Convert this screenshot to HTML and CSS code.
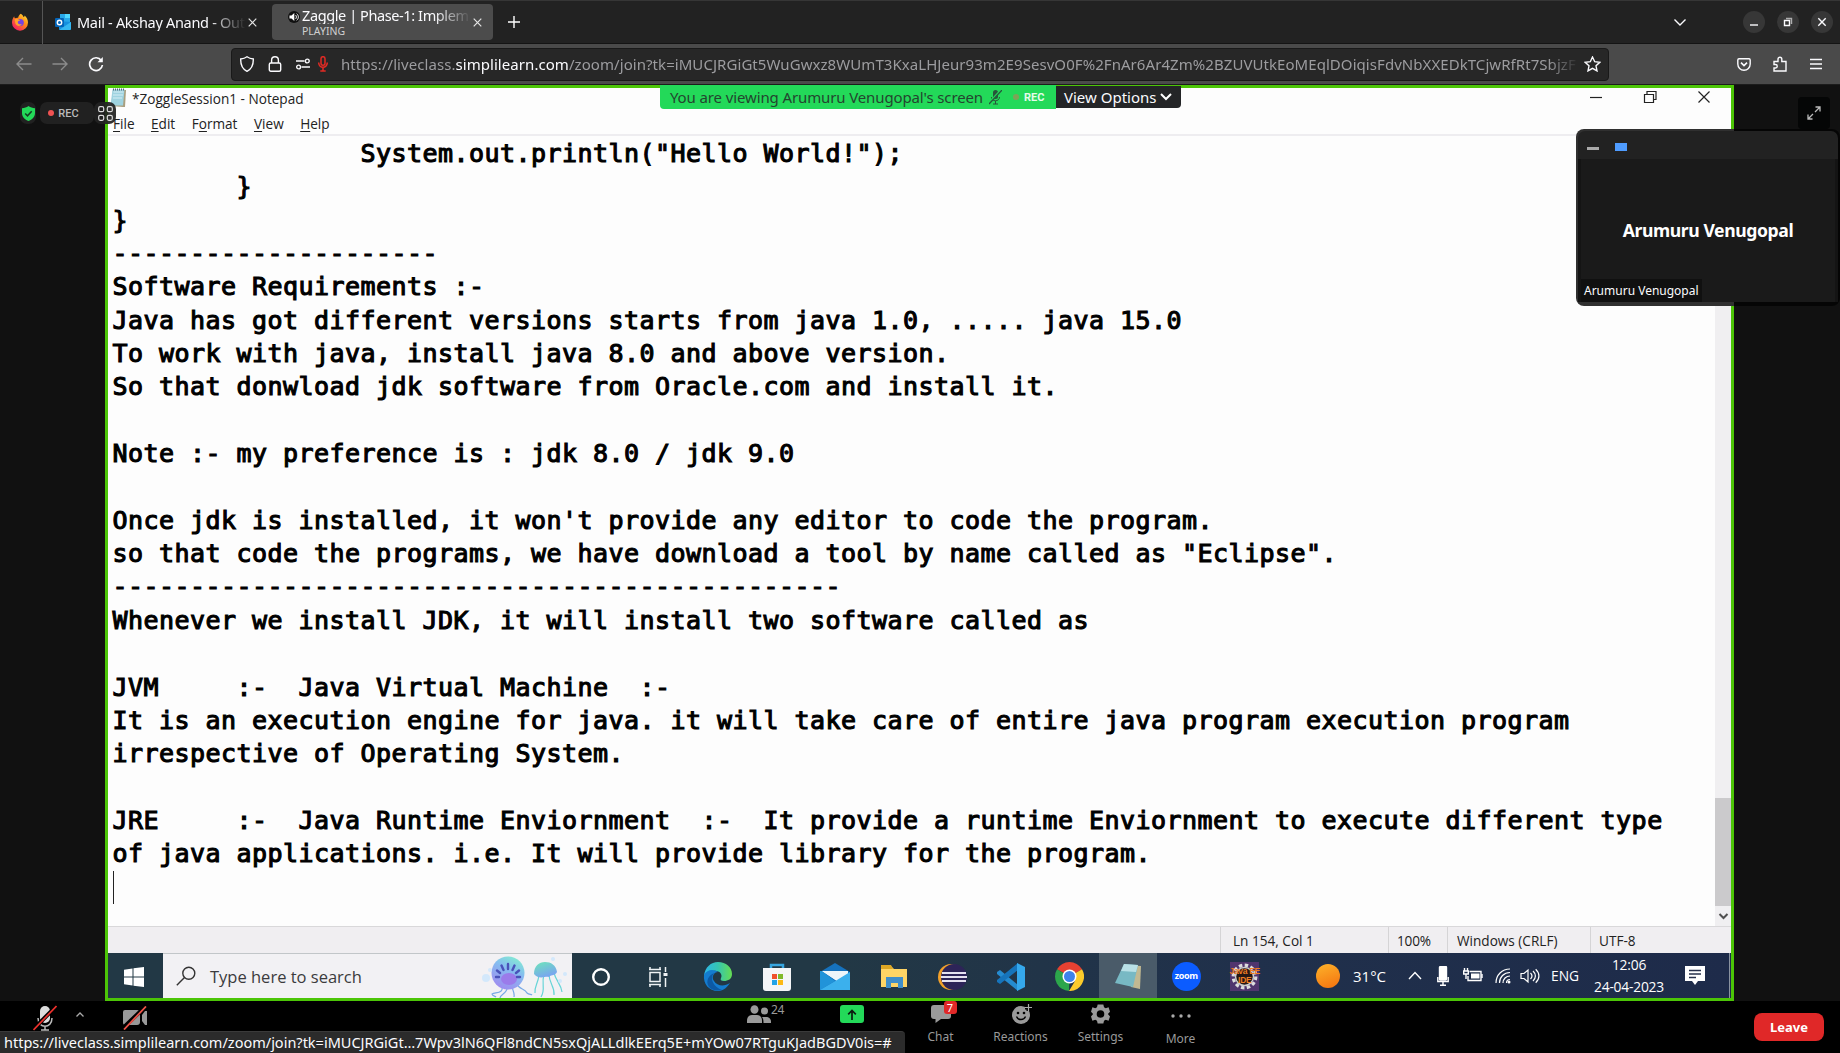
FILE: index.html
```html
<!DOCTYPE html>
<html lang="en">
<head>
<meta charset="utf-8">
<title>Zaggle | Phase-1: Implementation</title>
<link rel="stylesheet" href="styles.css">
</head>
<body>
<header class="tabs">
  <div class="pinned">
    <svg width="18" height="18" viewBox="0 0 18 18"><defs><linearGradient id="fx" x1="1" y1="0" x2=".2" y2="1"><stop offset="0" stop-color="#fff044"/><stop offset=".45" stop-color="#ff8b16"/><stop offset="1" stop-color="#f5156c"/></linearGradient></defs><path d="M9.8.8c1.500.8 2.400 2 2.600 3.300 1-.2 1.300-.9 1.300-1.500 1.900 1.700 3.300 4.100 3.300 7A8 8 0 0 1 1 9.700c0-2.500.8-4.600 2.200-6.500 0 1 .3 1.600.8 2.100 1-.6 2.100-.8 3.100-.6C7.500 3 8.300 1.800 9.800.8z" fill="url(#fx)"/><circle cx="9.300" cy="9.600" r="3.500" fill="#7543e3"/><path d="M3.600 6.500c2-1 4.200-.2 5.700 1.100-1.700.1-2.500.8-2.500 1.900 0 1.500 2 2.400 4 1.500-1 2.600-5.300 2.700-6.400-.4" fill="#ffa32b"/></svg>
  </div>
  <div class="tab tab-mail">
    <svg width="16" height="16" viewBox="0 0 16 16"><path d="M5 0h10v8H5z" fill="#28a8ea"/><path d="M10 0h5v4h-5z" fill="#50d9ff"/><path d="M4 7l12 1v7a1 1 0 0 1-1 1H5a1 1 0 0 1-1-1z" fill="#1490df"/><path d="M4 16l12-8v7l-1 1z" fill="#35b8f1"/><rect y="4" width="9" height="9" rx="1" fill="#0364b8"/><circle cx="4.500" cy="8.500" r="2.200" fill="none" stroke="#fff" stroke-width="1.400"/></svg>
    <span class="tab-title">Mail - Akshay Anand - Out</span>
    <svg class="x" width="9" height="9" viewBox="0 0 9 9"><path d="M.7.7l7.600 7.600M8.300.7L.7 8.300"/></svg>
  </div>
  <div class="tab tab-live">
    <svg class="sound" width="12" height="12" viewBox="0 0 12 12"><circle cx="6" cy="6" r="6" fill="#111"/><path d="M1.500 4.500H3.500L6.300 2v8L3.500 7.500h-2z" fill="#fff"/><path d="M7.500 4c1.200 1 1.200 3 0 4M8.700 2.600c2.200 1.800 2.200 5 0 6.800" fill="none" stroke="#fff" stroke-width=".9"/></svg>
    <div class="stack"><span class="tab-title">Zaggle | Phase-1: Implem</span><span class="playing">PLAYING</span></div>
    <svg class="x" width="9" height="9" viewBox="0 0 9 9"><path d="M.7.7l7.600 7.600M8.300.7L.7 8.300"/></svg>
  </div>
  <svg class="plus" width="12" height="12" viewBox="0 0 12 12"><path d="M6 0v12M0 6h12"/></svg>
  <div class="window-buttons">
    <svg class="list" width="12" height="7" viewBox="0 0 12 7"><path d="M.5.5L6 6 11.500.5"/></svg>
    <span class="round"><svg width="10" height="10" viewBox="0 0 10 10"><path d="M1 8h8"/></svg></span>
    <span class="round"><svg width="10" height="10" viewBox="0 0 10 10"><path d="M1.500 3.500h5v5h-5z"/><path d="M3 1.500h5.500V7" opacity=".6"/></svg></span>
    <span class="round"><svg width="10" height="10" viewBox="0 0 10 10"><path d="M1.300 1.300l7.400 7.400M8.700 1.300L1.300 8.700"/></svg></span>
  </div>
</header>
<nav class="toolbar">
  <svg class="nav dim" width="16" height="14" viewBox="0 0 16 14"><path d="M15.500 7H1.500M7 1L1 7l6 6"/></svg>
  <svg class="nav dim" width="16" height="14" viewBox="0 0 16 14"><path d="M.5 7h14M9 1l6 6-6 6"/></svg>
  <svg class="nav" width="16" height="16" viewBox="0 0 16 16"><path d="M13.300 4.500A6.400 6.400 0 1 0 14.400 9" stroke-width="1.700"/><path d="M14.800 1v5.200H9.500z" fill="#fbfbfe" stroke="none"/></svg>
  <div class="urlbar">
    <svg width="16" height="16" viewBox="0 0 16 16"><path d="M8 .8c2 1.500 4 2 6.300 2.200C14.500 9 12.500 13.200 8 15.300 3.500 13.200 1.500 9 1.700 3 4 2.800 6 2.300 8 .8z"/></svg>
    <svg class="lock" width="14" height="16" viewBox="0 0 14 16"><rect x="1.300" y="7" width="11.400" height="8.200" rx="1.500"/><path d="M3.600 7V4.200a3.400 3.400 0 0 1 6.800 0V7"/></svg>
    <svg class="perm" width="14" height="12" viewBox="0 0 14 12"><path d="M0 3h8.500M5.500 9H14"/><circle cx="11.300" cy="3" r="1.900"/><circle cx="2.600" cy="9" r="1.900"/></svg>
    <svg class="urlmic" width="10" height="16" viewBox="0 0 10 16"><rect x="3" y=".7" width="4" height="8.500" rx="2"/><path d="M.7 6.500a4.300 4.800 0 0 0 8.600 0M5 11.500V15M2.300 15h5.400"/></svg>
    <span class="url">https://liveclass.<b>simplilearn.com</b>/zoom/join?tk=iMUCJRGiGt5WuGwxz8WUmT3KxaLHJeur93m2E9SesvO0F%2FnAr6Ar4Zm%2BZUVUtkEoMEqlDOiqisFdvNbXXEDkTCjwRfRt7SbjzF</span>
    <svg class="star" width="17" height="16" viewBox="0 0 17 16"><path d="M8.500 1l2.200 4.700 5.100.6-3.800 3.500 1 5.100-4.500-2.500L4 14.900l1-5.100L1.200 6.300l5.100-.6z"/></svg>
  </div>
  <div class="tools">
    <svg width="14" height="13" viewBox="0 0 14 13"><path d="M2 .8h10A1.300 1.300 0 0 1 13.200 2v4A6.200 6.200 0 0 1 .8 6V2A1.300 1.300 0 0 1 2 .8z"/><path d="M4 4.700l3 2.900 3-2.900" stroke-width="1.600"/></svg>
    <svg width="14" height="16" viewBox="0 0 14 16"><path d="M1 5.500h4V3.200a1.900 1.900 0 0 1 3.800 0v2.300H13V15H1v-3h1.500a1.700 1.700 0 0 0 0-3.500H1z"/></svg>
    <svg width="14" height="12" viewBox="0 0 14 12"><path d="M1 1.500h12M1 6h12M1 10.500h12"/></svg>
  </div>
</nav>

<main class="meeting">
  <section class="share">
    <div class="np-title">
      <svg width="17" height="20" viewBox="0 0 17 20"><path d="M3 2h13l-1 17H13L1 18z" fill="#a99f80"/><path d="M2.500 1.500h12L13 17.500H.5z" fill="#9fd3e0"/><path d="M3.500 4h10M3 7h10M3 10h9" stroke="#d5eef5"/><path d="M3 1.500h12" stroke="#567" stroke-dasharray="1 1" stroke-width="2"/></svg>
      <span>*ZoggleSession1 - Notepad</span>
      <svg class="np-controls" width="122" height="14" viewBox="0 0 122 14"><path d="M1 7.500h12"/><path d="M55.500 4.500h9v8h-9zM58 4V1.500h9v8H65"/><path d="M109.500 1.500l11 11M120.500 1.500l-11 11"/></svg>
    </div>
    <div class="np-menu"><span><u>F</u>ile</span><span><u>E</u>dit</span><span>F<u>o</u>rmat</span><span><u>V</u>iew</span><span><u>H</u>elp</span></div>
    <div class="np-body">
<pre class="np-text">                System.out.println("Hello World!");
        }
}
---------------------
Software Requirements :-
Java has got different versions starts from java 1.0, ..... java 15.0
To work with java, install java 8.0 and above version.
So that donwload jdk software from Oracle.com and install it.

Note :- my preference is : jdk 8.0 / jdk 9.0

Once jdk is installed, it won't provide any editor to code the program.
so that code the programs, we have download a tool by name called as "Eclipse".
-----------------------------------------------
Whenever we install JDK, it will install two software called as

JVM     :-  Java Virtual Machine  :-
It is an execution engine for java. it will take care of entire java program execution program
irrespective of Operating System.

JRE     :-  Java Runtime Enviornment  :-  It provide a runtime Enviornment to execute different type
of java applications. i.e. It will provide library for the program.
<span class="caret"></span></pre>
      <div class="scroll"><div class="thumb"></div><svg width="16" height="20" viewBox="0 0 16 20"><path d="M4.500 8l4 4 4-4" fill="none" stroke="#505050" stroke-width="2"/></svg></div>
    </div>
    <div class="np-status"><span class="s1">Ln 154, Col 1</span><span class="s2">100%</span><span class="s3">Windows (CRLF)</span><span class="s4">UTF-8</span></div>
    <div class="taskbar">
      <div class="start"><svg width="20" height="20" viewBox="0 0 20 20" fill="#fff"><path d="M0 2.700l8.500-1.200v8H0zM9.500 1.300L20 0v9.500H9.500zM0 10.500h8.500v8L0 17.300zM9.500 10.500H20V20L9.500 18.700z"/></svg></div>
      <div class="search">
        <svg class="lens" width="20" height="20" viewBox="0 0 20 20"><circle cx="12.800" cy="7.200" r="6"/><path d="M8.500 11.500L.8 19.300"/></svg>
        <span>Type here to search</span>
        <svg class="jelly" width="86" height="43" viewBox="0 0 86 43"><defs><linearGradient id="j1" x1=".8" y1="0" x2=".3" y2="1"><stop offset="0" stop-color="#83efd0"/><stop offset=".4" stop-color="#85bdf0"/><stop offset="1" stop-color="#a08af0"/></linearGradient><linearGradient id="j2" x2=".5" y2="1"><stop offset="0" stop-color="#6de7b9"/><stop offset="1" stop-color="#79a4f0"/></linearGradient></defs><g fill="none" stroke="#78a9e6" stroke-width="1.200"><path d="M20 30c2 9-6 7-10 9 0 2 3 2 4 3M25 31c2 7-7 8-7 12M30 30c0 6 3 7 2 12M35 29c2 6 8 4 10 9 2 2 4 1 5 2"/><path d="M57 20c-1 9-5 12-4 18M62 19c-3 11 2 15-3 23M67 19c0 10 6 12 5 21M72 18c2 8 7 11 8 19" stroke="#66d4d7"/></g><circle cx="26" cy="18" r="16.500" fill="url(#j1)"/><ellipse cx="27" cy="24" rx="8" ry="6" fill="#9b7bea"/><g stroke="#4a52b9" stroke-width="2.400" stroke-linecap="round"><path d="M26 14V9M21.500 15l-2-4.500M30.500 15l2-4.500M18 18l-3-2.500M34 18l3-2.500M17 22h-3M35 22h3"/></g><path d="M52 19C52 11 57 7 63 7s11 3 12 10c-2 4-5 2-8 5-4-1-10 3-15-3z" fill="url(#j2)"/><g fill="#d3e8fb"><circle cx="4" cy="23" r="4"/><circle cx="8" cy="15" r="2"/><circle cx="83" cy="19" r="2"/><circle cx="71" cy="4" r="2"/><circle cx="78" cy="26" r="2"/></g></svg>
      </div>
      <div class="apps">
        <div class="app"><svg width="20" height="20" viewBox="0 0 20 20"><circle cx="10" cy="10" r="7.800" fill="none" stroke="#fff" stroke-width="2.400"/></svg></div>
        <div class="app taskview"><svg width="20" height="20" viewBox="0 0 20 20" fill="none" stroke="#eef2f4" stroke-width="1.500"><rect x="2" y="5.500" width="10" height="9"/><path d="M1 2.500h12M1 17.500h12M2 0v3M12 0v3M2 17v3M12 17v3M17.500 0v5M17.500 11v9"/><path d="M15.500 7.500h4" stroke-width="3"/></svg></div>
        <div class="app"><svg width="30" height="29" viewBox="0 0 30 29"><defs><linearGradient id="ed" x2="1"><stop offset="0" stop-color="#2cb6e9"/><stop offset=".5" stop-color="#36c4b0"/><stop offset="1" stop-color="#65dd52"/></linearGradient></defs><path d="M1 14C2 5 8 0 15 0c8 0 14 5 14 12 0 5-4 7-8 7-3 0-4-1-3-3 3-6-7-12-17-2z" fill="url(#ed)"/><path d="M1 13C4 7 11 7 15 10c-4 0-7 5-4 9 3 5 10 6 16 2-4 6-8 8-12 8C6 29 0 22 1 13z" fill="#147ccf"/><path d="M11 11c-5 6 0 14 8 17-4 1-9 1-13-3-4-6 0-12 5-14z" fill="#0c59a4"/></svg></div>
        <div class="app"><svg width="28" height="28" viewBox="0 0 28 28"><path d="M8 8V2h12v6" fill="none" stroke="#36a5df" stroke-width="2.500"/><path d="M0 5h28v20a3 3 0 0 1-3 3H3a3 3 0 0 1-3-3z" fill="#f4f5f7"/><path d="M9 11h5v5H9z" fill="#f0512c"/><path d="M15 11h5v5h-5z" fill="#7fb92b"/><path d="M9 17h5v5H9z" fill="#22a3e8"/><path d="M15 17h5v5h-5z" fill="#fcb813"/></svg></div>
        <div class="app"><svg width="30" height="27" viewBox="0 0 30 27"><path d="M0 9L15 0l15 9v18H0z" fill="#1672bd"/><path d="M2 8h26v3L17 18z" fill="#eef6fa"/><path d="M2 8l13 10-15 9V8z" fill="#2193d9"/><path d="M2 8h26L17 18z" fill="#eef6fa"/><path d="M0 27l17-10 13-8v18z" fill="#3bb0ed"/></svg></div>
        <div class="app"><svg width="26" height="23" viewBox="0 0 26 23"><path d="M0 1h10l3 3h13v18H0z" fill="#ffd565"/><path d="M0 0h10l2 4H0z" fill="#dda724"/><path d="M5 23V12h17v11h-5v-5h-7v5z" fill="#408ec9"/></svg></div>
        <div class="app"><svg width="29" height="28" viewBox="0 0 29 28"><circle cx="13" cy="14" r="13" fill="#f3a12a"/><circle cx="16" cy="14" r="13" fill="#2d2458"/><path d="M4 10h24M3 14h26M4 18h24" stroke="#e5e2f0" stroke-width="2.200"/></svg></div>
        <div class="app"><svg width="28" height="28" viewBox="0 0 28 28"><path d="M0 9l3-2 18 15V28L0 11z" fill="#258bd0"/><path d="M0 19l3 2L21 7V0L0 17z" fill="#1674bb"/><path d="M20 0l8 4v20l-8 4z" fill="#35a8ec"/></svg></div>
        <div class="app"><svg width="29" height="29" viewBox="0 0 29 29"><path d="M14.500 14.500L2 7.200a14.500 14.500 0 0 1 25 0z" fill="#e54132"/><path d="M14.500 14.500L14 29A14.500 14.500 0 0 1 2 7.200z" fill="#2ca64b"/><path d="M14.500 14.500L27 7.200A14.500 14.500 0 0 1 14 29l6-10z" fill="#fccb2b"/><circle cx="14.500" cy="14.500" r="7" fill="#fff"/><circle cx="14.500" cy="14.500" r="5.500" fill="#3f82ec"/></svg></div>
        <div class="app active"><svg width="26" height="27" viewBox="0 0 26 27"><path d="M11 2l15 1-1 23-9-2z" fill="#c2b992"/><path d="M9 1l14 1-5 22L0 20z" fill="#78b9c4"/><path d="M9 1l14 1-2 7L6 8z" fill="#b9e0e6"/></svg></div>
        <div class="app"><span class="zoom-app">zoom</span></div>
        <div class="app"><span class="java-app"><svg width="29" height="29" viewBox="0 0 29 29"><circle cx="14.500" cy="14.500" r="11.300" fill="none" stroke="#ddd" stroke-width="3.200" stroke-dasharray="3.500 2.400"/><circle cx="14.500" cy="14.500" r="9" fill="#251716" stroke="#ccc" stroke-width="1.500"/></svg><span>Java EE<br>IDE</span></span></div>
      </div>
      <div class="tray">
        <span class="sun"></span><span class="temp">31°C</span>
        <svg class="t-up" width="14" height="9" viewBox="0 0 14 9"><path d="M1 8l6-6.500L13 8"/></svg>
        <svg class="t-mic" width="12" height="20" viewBox="0 0 12 20"><rect x="2.500" y=".5" width="7" height="13.500" rx="1" fill="#fff"/><path d="M.8 11v4.500h10.400V11M6 15.500v3.700M3 19.200h6"/></svg>
        <svg class="t-bat" width="20" height="15" viewBox="0 0 20 15"><path d="M6.500 3.500h11.500v9H5V8"/><path d="M8 5.500h8.500v5H8z" fill="#fff" stroke="none"/><path d="M19 6v4M1.500 0v3M4.500 0v3M.7 3h4.600v3H.7zM3 6v5"/></svg>
        <svg class="t-wifi" width="16" height="16" viewBox="0 0 16 16"><path d="M1 15C1 7 7 1 15 1M4.500 15C4.500 9 9 4.500 15 4.500M8 15c0-4 3-7 7-7M11.500 15c0-2 1.500-3.500 3.500-3.500" stroke-width="1.200"/><circle cx="14" cy="14" r="1.500" fill="#fff" stroke="none"/></svg>
        <svg class="t-vol" width="20" height="16" viewBox="0 0 20 16"><path d="M1 5.500h3L8 2v12l-4-3.500H1zM10.500 5c2 2 2 4 0 6M13 3c3.200 3 3.200 7 0 10M15.700 1.200c4.300 4 4.300 9.600 0 13.600" stroke-width="1.200"/></svg>
        <span class="eng">ENG</span>
        <span class="clock"><span>12:06</span><span>24-04-2023</span></span>
        <svg class="t-note" width="20" height="20" viewBox="0 0 20 20"><path d="M0 0h20v15h-7l-3 4-3-4H0z" fill="#fff" stroke="none"/><path d="M4 4.500h12M4 8h12M4 11.500h7" stroke="#26304b" stroke-width="1.300"/></svg>
      </div>
    </div>
  </section>

  <div class="banner">
    <div class="viewing"><span>You are viewing Arumuru Venugopal's screen</span>
      <svg width="13" height="15" viewBox="0 0 13 15"><rect x="4" y="0" width="5" height="9" rx="2.500" fill="#27543a"/><path d="M2.500 7c0 5 8 5 8 0M6.500 11v3M4 14h5" fill="none" stroke="#27543a"/><path d="M0 13L12 0" stroke="#23d959" stroke-width="2"/><path d="M0 14L13 0" stroke="#27543a" stroke-width="1.200"/></svg>
      <i></i><b>REC</b></div>
    <div class="options">View Options<svg width="12" height="8" viewBox="0 0 12 8"><path d="M1 1l5 5 5-5" fill="none" stroke="#fff" stroke-width="2"/></svg></div>
  </div>

  <div class="badges">
    <div class="shield"><svg width="13" height="15" viewBox="0 0 13 15"><path d="M6.500 0C8.500 1.500 10.500 2 13 2.200V7c0 4-3 6.800-6.500 8C3 13.800 0 11 0 7V2.200C2.500 2 4.500 1.500 6.500 0z" fill="#23d959"/><path d="M3.200 7.500l2.300 2.300 4.200-4.500" fill="none" stroke="#153c23" stroke-width="1.500"/></svg></div>
    <div class="rec"><i></i>REC</div>
    <div class="grid"><svg width="15" height="15" viewBox="0 0 15 15"><g fill="none" stroke="#ddd" stroke-width="1.200"><rect x=".7" y=".7" width="5" height="5" rx="1.500"/><rect x="9.300" y=".7" width="5" height="5" rx="1.500"/><rect x=".7" y="9.300" width="5" height="5" rx="1.500"/><rect x="9.300" y="9.300" width="5" height="5" rx="1.500"/></g></svg></div>
  </div>
  <div class="expand"><svg width="14" height="14" viewBox="0 0 14 14"><path d="M8 6l5-5M8.500 1H13v4.500M6 8l-5 5M1 8.500V13h4.500" fill="none" stroke="#bbb" stroke-width="1.300"/></svg></div>

  <aside class="floating">
    <div class="float-head"><i class="mini"></i><i class="speaker"></i></div>
    <div class="video"><strong>Arumuru Venugopal</strong><span>Arumuru Venugopal</span></div>
  </aside>

  <footer class="controls">
    <svg class="c-mic" width="24" height="28" viewBox="0 0 24 28"><rect x="7" y="2" width="10" height="17" rx="5" fill="#ddd"/><path d="M5 14c0 11 14 11 14 0M12 22v4M8 26h8" fill="none" stroke="#bbb" stroke-width="1.500"/><path d="M.5 25L23.500 2" stroke="#000" stroke-width="4"/><path d="M.5 26L23.500 2" stroke="#ee302c" stroke-width="1.700"/></svg>
    <svg class="c-caret" width="8" height="5" viewBox="0 0 8 5"><path d="M.5 4.500L4 1l3.500 3.500" fill="none" stroke="#aaa" stroke-width="1.300"/></svg>
    <svg class="c-cam" width="24" height="24" viewBox="0 0 24 24"><path d="M0 6a2 2 0 0 1 2-2h12a3 3 0 0 1 3 3v9a3 3 0 0 1-3 3H2a2 2 0 0 1-2-2zM19 9l3-4h2v14h-2l-3-4z" fill="#999"/><path d="M0 22L23 0" stroke="#000" stroke-width="4"/><path d="M1 23.500L23 .5" stroke="#f05348" stroke-width="1.800"/></svg>
    <div class="people"><svg width="24" height="18" viewBox="0 0 24 18" fill="#9a9a9a"><ellipse cx="7.500" cy="4.500" rx="4" ry="4.300"/><path d="M0 18v-2c0-4 2-6 5-6h5c3 0 5 2 5 6v2z"/><ellipse cx="17.500" cy="6" rx="3.500" ry="3.500"/><path d="M16.500 18c0-3-.3-4.500-1.500-6h4c3 0 5 2 5 4.500V18z"/></svg><span>24</span></div>
    <div class="share-btn"><svg width="10" height="11" viewBox="0 0 10 11"><path d="M5 11V1.500M1.200 5.300L5 1.500l3.800 3.800" fill="none" stroke="#0b1c10" stroke-width="1.700"/></svg></div>
    <div class="ctl"><div class="ico"><svg width="20" height="18" viewBox="0 0 20 18"><path d="M3 0h14a3 3 0 0 1 3 3v8a3 3 0 0 1-3 3h-7l-5.500 4v-4H3a3 3 0 0 1-3-3V3a3 3 0 0 1 3-3z" fill="#9a9a9a"/></svg><em>7</em></div>Chat</div>
    <div class="ctl"><div class="ico"><svg width="22" height="20" viewBox="0 0 22 20"><circle cx="11" cy="11" r="9" fill="#9a9a9a"/><circle cx="8" cy="9" r="1.300"/><circle cx="14" cy="9" r="1.300"/><path d="M6.500 12.500c1.500 4 7.500 4 9 0" fill="none" stroke="#000" stroke-width="1.400"/><path d="M18.500 0v7M15 3.500h7" stroke="#000" stroke-width="4"/><path d="M18.500 0v7M15 3.500h7" stroke="#aaa" stroke-width="1.200"/></svg></div>Reactions</div>
    <div class="ctl"><div class="ico"><svg width="19" height="20" viewBox="0 0 20 20"><path d="M7 0h6l.7 3 1.800 1 3-1L20 7.500 17.800 10 20 12.500 18.500 17l-3-1-1.800 1L13 20H7l-.7-3-1.800-1-3 1L0 12.500 2.200 10 0 7.500 1.500 3l3 1 1.800-1z" fill="#9a9a9a"/><circle cx="10" cy="10" r="4"/></svg></div>Settings</div>
    <div class="ctl more"><div class="ico"><svg width="20" height="6" viewBox="0 0 20 6" fill="#aaa"><circle cx="2" cy="3" r="1.700"/><circle cx="10" cy="3" r="1.700"/><circle cx="18" cy="3" r="1.700"/></svg></div>More</div>
    <button class="leave">Leave</button>
  </footer>
</main>
<div class="link-status">https://liveclass.simplilearn.com/zoom/join?tk=iMUCJRGiGt…7Wpv3lN6QFl8ndCN5sxQjALLdlkEErq5E+mYOw07RTguKJadBGDV0is=#</div>
</body>
</html>
```
FILE: styles.css
```css
* { box-sizing: border-box; }
body { margin: 0; width: 1840px; height: 1053px; overflow: hidden; background: #111; font-family: "Noto Sans", "Open Sans", sans-serif; color: #fbfbfe; }
svg { display: block; flex: none; }
span { white-space: nowrap; }

/* browser tabs */
.tabs { display: flex; align-items: center; height: 44px; background: #222; border-top: 1px solid #363636; border-bottom: 1px solid #141414; }
.pinned { width: 43px; height: 43px; border-right: 1px solid #555; display: flex; align-items: center; padding-left: 11px; }
.tab { display: flex; align-items: center; }
.tab-title { overflow: hidden; font-size: 14.5px; line-height: 18px; letter-spacing: -.4px; mask-image: linear-gradient(90deg, #000 78%, transparent); }
.tab-mail { width: 229px; padding-left: 12px; }
.tab-mail .tab-title { width: 169px; margin: 0 2px 0 6px; mask-image: linear-gradient(90deg, #000 78%, transparent); letter-spacing: -.3px; }
.x { fill: none; stroke: #e5e5e5; stroke-width: 1.2; }
.tab-live { width: 221px; height: 36px; background: #4c4c4c; border-radius: 4px; }
.sound { margin: -11px 2px 0 16px; }
.stack { display: flex; flex-direction: column; width: 169px; margin-right: 2px; }
.playing { font-size: 10.5px; line-height: 14px; color: #d0d0d0; letter-spacing: 0; }
.plus { margin-left: 15px; fill: none; stroke: #fff; stroke-width: 1.4; }
.window-buttons { margin-left: auto; display: flex; align-items: center; gap: 12px; padding-right: 7px; fill: none; stroke: #fbfbfe; stroke-width: 1.4; }
.list { margin-right: 45px; }
.round { width: 22px; height: 22px; border-radius: 50%; background: #373737; display: flex; align-items: center; justify-content: center; }

/* address bar */
.toolbar { display: flex; align-items: center; height: 41px; background: #4a4a4a; border-bottom: 1px solid #1c1c1c; padding: 0 17px 0 16px; fill: none; stroke: #fbfbfe; stroke-width: 1.4; }
.nav { margin-right: 20px; }
.nav.dim { stroke: #8c8c8c; }
.urlbar { display: flex; align-items: center; width: 1378px; height: 33px; margin-left: 107px; background: #272727; border: 1px solid #191919; border-radius: 4px; padding: 0 7px; }
.lock { margin-left: 13px; }
.perm { margin-left: 14px; }
.urlmic { margin-left: 8px; stroke: #e22b24; stroke-width: 1.5; }
.url { width: 1238px; margin-left: 13px; overflow: hidden; font-size: 15px; color: #9c9c9f; letter-spacing: .06px; mask-image: linear-gradient(90deg, #000 97.5%, transparent); }
.url b { font-weight: 400; color: #fbfbfe; }
.star { margin-left: auto; }
.tools { display: flex; align-items: center; gap: 22px; margin-left: auto; }

/* meeting area */
.meeting { position: relative; height: 968px; background: #111; }
.share { display: flex; flex-direction: column; width: 1629px; height: 916px; margin-left: 105px; border: 3px solid #4cc507; background: #fdfdfd; color: #222; font-family: "Open Sans", "Noto Sans", sans-serif; }
.np-title { display: flex; align-items: flex-start; height: 25px; padding: 0 20px 0 2px; font-size: 13.6px; line-height: 21px; }
.np-title span { margin-left: 5px; }
.np-controls { margin: 2px 0 0 auto; fill: none; stroke: #222; stroke-width: 1.2; }
.np-menu { display: flex; height: 23px; gap: 16.5px; padding-left: 5px; font-size: 13.6px; line-height: 22px; border-bottom: 2px solid #eeedf0; }
.np-menu u { text-underline-offset: 2px; }
.np-body { display: flex; flex: 1; min-height: 0; }
.np-text { flex: 1; margin: 0; padding: 1px 0 0 4.5px; font: 25px/33.35px "DejaVu Sans Mono", monospace; letter-spacing: .45px; color: #000; -webkit-text-stroke: 1.1px #000; overflow: hidden; }
.caret { display: block; width: 1px; height: 33px; background: #222; }
.scroll { display: flex; flex-direction: column; justify-content: flex-end; width: 16px; background: #f0eff1; }
.thumb { height: 108px; background: #cbcacc; }
.np-status { display: flex; justify-content: flex-end; height: 27px; background: #f0eef1; border-top: 1px solid #d9d8da; font-size: 13.6px; line-height: 28px; }
.np-status span { border-left: 1px solid #d5d4d6; }
.s1 { width: 168px; padding-left: 12px; }
.s2 { width: 59px; padding-left: 8px; letter-spacing: -.2px; }
.s3 { width: 143px; padding-left: 9px; }
.s4 { width: 141px; padding-left: 8px; }

/* Windows taskbar */
.taskbar { display: flex; height: 45px; background: linear-gradient(90deg, #223845 0 45%, #20304b 70%, #1e2b4a); color: #fff; }
.start { width: 55px; display: flex; align-items: center; padding: 2px 0 0 16px; }
.search { width: 409px; display: flex; align-items: center; background: #f2f1f4; border-top: 1px solid #c2c6c9; color: #3b3b3d; font-size: 16.5px; padding-left: 13px; }
.lens { fill: none; stroke: #333; stroke-width: 1.4; margin-right: 14px; }
.jelly { margin-left: auto; margin-right: 4px; }
.apps { display: flex; }
.app { width: 58.5px; display: flex; align-items: center; justify-content: center; padding-top: 2px; }
.app.taskview { padding-right: 3px; }
.app.active { background: #4a5b69; }
.zoom-app { width: 29px; height: 29px; border-radius: 50%; background: #0b5cff; font: bold 9px/27px "Open Sans", sans-serif; text-align: center; letter-spacing: -.4px; }
.java-app { position: relative; width: 29px; height: 29px; background: #50356e; }
.java-app span { position: absolute; inset: 5px -4px auto; font: bold 8.5px/9px "Liberation Sans", sans-serif; color: #ed7d22; text-align: center; letter-spacing: -.3px; }
.tray { display: flex; flex: 1; align-items: center; padding-left: 42px; fill: none; stroke: #fff; stroke-width: 1.4; font-size: 15px; border-right: 1px solid #8a93a0; margin-right: 1px; }
.sun { width: 24px; height: 24px; border-radius: 50%; background: linear-gradient(160deg, #fdb32a, #f4710f); margin-right: 12px; }
.temp { width: 56px; padding-left: 1px; }
.t-mic { margin-left: 15px; }
.t-bat { margin-left: 14px; }
.t-wifi { margin-left: 12px; }
.t-vol { margin-left: 9px; }
.eng { margin-left: 11px; font-size: 13.8px; width: 42px; }
.clock { display: flex; flex-direction: column; width: 72px; text-align: center; font-size: 13.8px; line-height: 21.5px; letter-spacing: -.2px; }
.t-note { margin-left: 20px; }

/* overlays on the shared screen */
.banner { position: absolute; left: 660px; top: 0; display: flex; align-items: flex-start; font-size: 15px; }
.viewing { display: flex; align-items: center; width: 396px; height: 24px; padding-left: 10px; background: #23d959; color: #24452f; border-radius: 0 0 0 4px; }
.viewing > span { width: 319px; letter-spacing: -.12px; }
.viewing i { width: 6px; height: 6px; border-radius: 50%; background: #7da457; margin: 0 5px 0 11px; }
.viewing b { font: bold 11px "Roboto", sans-serif; color: #e5fbea; }
.options { display: flex; align-items: center; justify-content: space-between; width: 125px; height: 22px; margin-top: 1px; padding: 0 9px 0 8px; background: #242527; border-radius: 0 0 4px 0; }
.badges { position: absolute; left: 20px; top: 17px; display: flex; }
.badges > div { height: 22px; display: flex; align-items: center; justify-content: center; background: #212121; border-radius: 7px; }
.shield { width: 16px; margin-right: 4px; }
.rec { width: 54px; font: 500 11px "Roboto", sans-serif; letter-spacing: .1px; color: #bbb; padding-right: 7px; }
.rec i { width: 6px; height: 6px; border-radius: 50%; background: #f05252; margin-right: 4px; }
.badges .grid { width: 22px; background: rgba(34, 34, 34, .93); }
.expand { position: absolute; left: 1798px; top: 12px; width: 32px; height: 32px; border-radius: 4px; background: #050606; display: flex; align-items: center; justify-content: center; }
.floating { position: absolute; left: 1576px; top: 44px; width: 264px; height: 177px; padding: 2px 2px 4px; border-radius: 8px; background: linear-gradient(90deg, #303030 0 158px, #050505 158px); overflow: hidden; }
.float-head { display: flex; align-items: center; height: 28px; padding: 4px 0 0 9px; background: #222; border-radius: 7px 7px 0 0; }
.mini { width: 12px; height: 3px; margin: 3px 16px 0 0; background: #aaa; }
.speaker { width: 12px; height: 8px; background: #4f9cff; }
.video { display: flex; flex-direction: column; height: 143px; background: #1a1a1a; border: solid #141414; border-width: 0 3px; }
.video strong { flex: 1; text-align: center; font-size: 17.6px; line-height: 24px; padding-top: 59px; color: #fff; letter-spacing: -.4px; }
.video span { width: 121px; height: 23px; padding-left: 3px; background: #101010; font-size: 12px; line-height: 23px; }

/* meeting controls */
.controls { position: relative; display: flex; align-items: flex-start; height: 52px; background: #000; font-size: 12px; color: #999; }
.c-mic { margin: 3px 0 0 33px; }
.c-caret { margin: 11px 0 0 19px; }
.c-cam { margin: 5px 0 0 39px; }
.people { display: flex; width: 93px; margin: 4px 0 0 600px; }
.people span { margin-left: 0; line-height: 10px; letter-spacing: -.4px; }
.share-btn { width: 24px; height: 18px; margin-top: 4px; border-radius: 3px; background: #23d959; display: flex; align-items: center; justify-content: center; }
.ctl { width: 80px; text-align: center; line-height: 18px; }
.share-btn + .ctl { margin-left: 36.5px; }
.ico { position: relative; height: 27px; padding-top: 4px; }
.ico svg { margin: auto; }
.ctl:nth-of-type(4) .ico, .ctl:nth-of-type(5) .ico { padding-top: 3px; }
.ico em { position: absolute; left: 43px; top: 0; width: 13px; height: 13px; border-radius: 3px; background: #e02828; color: #fff; font-style: normal; font-size: 11px; line-height: 13px; }
.more .ico { height: 29px; padding-top: 12px; }
.leave { margin: 12px 16px 0 auto; width: 70px; height: 28px; border: 0; border-radius: 8px; background: #e02828; color: #fff; font: bold 13px "Noto Sans", sans-serif; }
.link-status { position: absolute; left: 0; bottom: 0; width: 905px; height: 22px; padding-left: 4px; background: #2b2b2b; border-top: 1px solid #3a3a3a; border-radius: 0 4px 0 0; font-size: 14.5px; line-height: 21px; white-space: nowrap; overflow: hidden; }
```
